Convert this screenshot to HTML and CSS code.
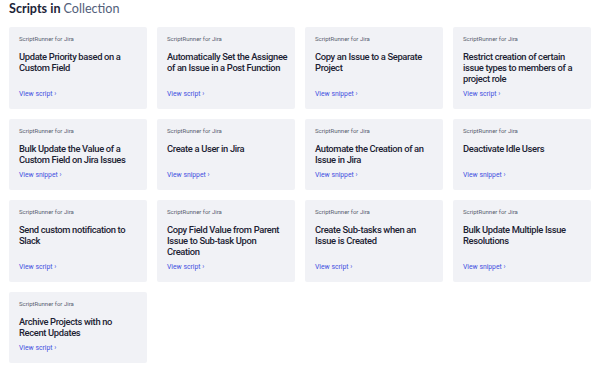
FILE: index.html
```html
<!DOCTYPE html>
<html>
<head>
<meta charset="UTF-8">
<title>Scripts in Collection</title>
<link rel="stylesheet" href="styles.css">
</head>
<body>
   <div class="page">
      <h2 class="heading">Scripts in <span class="muted">Collection</span></h2>
      <div class="grid">
         <div class="card">
            <div class="product">ScriptRunner for Jira</div>
            <div class="title">Update Priority based on a Custom Field</div>
            <a class="link" href="#">View script ›</a>
         </div>
         <div class="card">
            <div class="product">ScriptRunner for Jira</div>
            <div class="title">Automatically Set the Assignee of an Issue in a Post Function</div>
            <a class="link" href="#">View script ›</a>
         </div>
         <div class="card">
            <div class="product">ScriptRunner for Jira</div>
            <div class="title">Copy an Issue to a Separate Project</div>
            <a class="link" href="#">View snippet ›</a>
         </div>
         <div class="card">
            <div class="product">ScriptRunner for Jira</div>
            <div class="title">Restrict creation of certain issue types to members of a project role</div>
            <a class="link" href="#">View script ›</a>
         </div>
         <div class="card">
            <div class="product">ScriptRunner for Jira</div>
            <div class="title">Bulk Update the Value of a Custom Field on Jira Issues</div>
            <a class="link" href="#">View snippet ›</a>
         </div>
         <div class="card">
            <div class="product">ScriptRunner for Jira</div>
            <div class="title">Create a User in Jira</div>
            <a class="link" href="#">View snippet ›</a>
         </div>
         <div class="card">
            <div class="product">ScriptRunner for Jira</div>
            <div class="title">Automate the Creation of an Issue in Jira</div>
            <a class="link" href="#">View snippet ›</a>
         </div>
         <div class="card">
            <div class="product">ScriptRunner for Jira</div>
            <div class="title">Deactivate Idle Users</div>
            <a class="link" href="#">View snippet ›</a>
         </div>
         <div class="card">
            <div class="product">ScriptRunner for Jira</div>
            <div class="title">Send custom notification to Slack</div>
            <a class="link" href="#">View script ›</a>
         </div>
         <div class="card">
            <div class="product">ScriptRunner for Jira</div>
            <div class="title">Copy Field Value from Parent Issue to Sub-task Upon Creation</div>
            <a class="link" href="#">View script ›</a>
         </div>
         <div class="card">
            <div class="product">ScriptRunner for Jira</div>
            <div class="title">Create Sub-tasks when an Issue is Created</div>
            <a class="link" href="#">View script ›</a>
         </div>
         <div class="card">
            <div class="product">ScriptRunner for Jira</div>
            <div class="title">Bulk Update Multiple Issue Resolutions</div>
            <a class="link" href="#">View snippet ›</a>
         </div>
         <div class="card">
            <div class="product">ScriptRunner for Jira</div>
            <div class="title">Archive Projects with no Recent Updates</div>
            <a class="link" href="#">View script ›</a>
         </div>
      </div>
   </div>
</body>
</html>
```

FILE: styles.css
```css
body {
  margin: 0;
  padding: 0;
  background-color: #fff;
  font-family: Roboto, "Noto Sans", sans-serif;
  color: #172b4d;
}
.page {
  padding: 0 9px;
}
.heading {
  margin: 0 0 10px 0;
  font-family: Lato, "Noto Sans", sans-serif;
  font-size: 12.6px;
  line-height: 17px;
  font-weight: 700;
  color: #1c2438;
}
.heading .muted {
  font-weight: 400;
  color: #52607a;
}
.grid {
  display: grid;
  grid-template-columns: repeat(4, 138px);
  gap: 10px;
}
.card {
  display: flex;
  flex-direction: column;
  background-color: #f1f2f6;
  padding: 8px 6px 10px 10px;
  border-radius: 2px;
}
.product {
  font-size: 6px;
  line-height: 8px;
  color: #5a6172;
}
.title {
  margin-top: 8px;
  font-size: 9.4px;
  line-height: 11px;
  font-weight: 500;
  letter-spacing: -0.35px;
  color: #1c2233;
}
.link {
  margin-top: auto;
  padding-top: 5px;
  font-size: 6.8px;
  line-height: 10px;
  color: #3f4fe0;
  text-decoration: none;
}
```
